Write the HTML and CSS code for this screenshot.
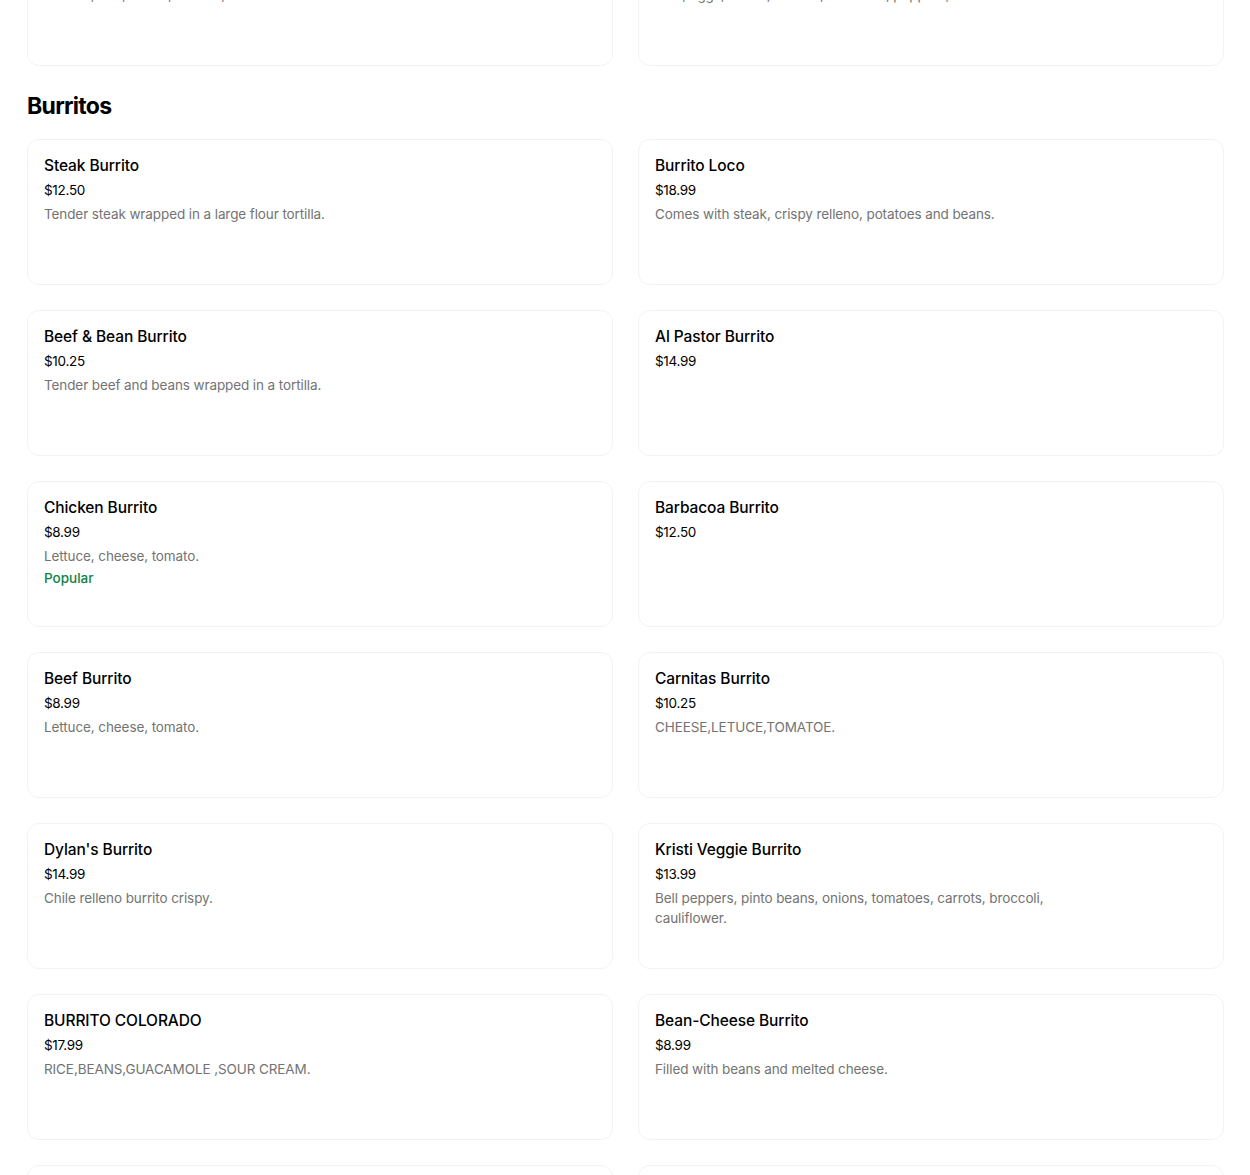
FILE: index.html
```html
<!DOCTYPE html>
<html lang="en">
<head>
<meta charset="utf-8">
<title>Menu</title>
<link rel="stylesheet" href="styles.css">
</head>
<body>
<main class="menu">
  <section class="section section-prev">
    <div class="grid">
      <div class="card">
        <div class="info">
          <div class="title">Breakfast Burrito</div>
          <div class="price">$10.99</div>
          <div class="desc">Lettuce, rice, beans, cheese, sour cream.</div>
        </div>
      </div>
      <div class="card">
        <div class="info">
          <div class="title">Huevos Rancheros</div>
          <div class="price">$12.99</div>
          <div class="desc">Rice, eggs, beans, cheese, tomatoes, peppers, tortillas.</div>
        </div>
      </div>
    </div>
  </section>

  <section class="section">
    <h2 class="section-title">Burritos</h2>
    <div class="grid">
      <div class="card"><div class="info">
        <div class="title">Steak Burrito</div>
        <div class="price">$12.50</div>
        <div class="desc">Tender steak wrapped in a large flour tortilla.</div>
      </div></div>
      <div class="card"><div class="info">
        <div class="title">Burrito Loco</div>
        <div class="price">$18.99</div>
        <div class="desc">Comes with steak, crispy relleno, potatoes and beans.</div>
      </div></div>
      <div class="card"><div class="info">
        <div class="title">Beef &amp; Bean Burrito</div>
        <div class="price">$10.25</div>
        <div class="desc">Tender beef and beans wrapped in a tortilla.</div>
      </div></div>
      <div class="card"><div class="info">
        <div class="title">Al Pastor Burrito</div>
        <div class="price">$14.99</div>
      </div></div>
      <div class="card"><div class="info">
        <div class="title">Chicken Burrito</div>
        <div class="price">$8.99</div>
        <div class="desc">Lettuce, cheese, tomato.</div>
        <div class="tag">Popular</div>
      </div></div>
      <div class="card"><div class="info">
        <div class="title">Barbacoa Burrito</div>
        <div class="price">$12.50</div>
      </div></div>
      <div class="card"><div class="info">
        <div class="title">Beef Burrito</div>
        <div class="price">$8.99</div>
        <div class="desc">Lettuce, cheese, tomato.</div>
      </div></div>
      <div class="card"><div class="info">
        <div class="title">Carnitas Burrito</div>
        <div class="price">$10.25</div>
        <div class="desc">CHEESE,LETUCE,TOMATOE.</div>
      </div></div>
      <div class="card"><div class="info">
        <div class="title">Dylan's Burrito</div>
        <div class="price">$14.99</div>
        <div class="desc">Chile relleno burrito crispy.</div>
      </div></div>
      <div class="card"><div class="info">
        <div class="title">Kristi Veggie Burrito</div>
        <div class="price">$13.99</div>
        <div class="desc">Bell peppers, pinto beans, onions, tomatoes, carrots, broccoli, cauliflower.</div>
      </div></div>
      <div class="card"><div class="info">
        <div class="title">BURRITO COLORADO</div>
        <div class="price">$17.99</div>
        <div class="desc">RICE,BEANS,GUACAMOLE ,SOUR CREAM.</div>
      </div></div>
      <div class="card"><div class="info">
        <div class="title">Bean-Cheese Burrito</div>
        <div class="price">$8.99</div>
        <div class="desc">Filled with beans and melted cheese.</div>
      </div></div>
      <div class="card"><div class="info">
        <div class="title">Bean Burrito</div>
        <div class="price">$8.50</div>
      </div></div>
      <div class="card"><div class="info">
        <div class="title">Veggie Burrito</div>
        <div class="price">$9.99</div>
      </div></div>
    </div>
  </section>
</main>
</body>
</html>
```

FILE: styles.css
```css
html, body {
  margin: 0;
  padding: 0;
  background: #ffffff;
}

body {
  font-family: Inter, "Noto Sans", "Liberation Sans", sans-serif;
  color: #000000;
  overflow: hidden;
}

.menu {
  padding: 0 26px 0 27px;
  margin-top: -80px;
}

.section-title {
  margin: 24px 0 17px;
  font-size: 23px;
  line-height: 32px;
  font-weight: 700;
  letter-spacing: -0.7px;
  color: #000000;
}

.grid {
  display: grid;
  grid-template-columns: 1fr 1fr;
  column-gap: 25px;
  row-gap: 25px;
}

.card {
  height: 146px;
  box-sizing: border-box;
  border: 1px solid #f3f3f3;
  border-radius: 12px;
  padding: 16px 16px 14px;
  background: #ffffff;
}

.info {
  max-width: 405px;
}

.title {
  font-size: 15.5px;
  line-height: 20px;
  font-weight: 500;
  color: #000000;
  letter-spacing: -0.1px;
}

.price {
  margin-top: 4px;
  font-size: 13.5px;
  line-height: 20px;
  color: #000000;
  letter-spacing: -0.3px;
}

.desc {
  margin-top: 4px;
  font-size: 13.5px;
  line-height: 20px;
  color: #737373;
  letter-spacing: -0.1px;
}

.tag {
  margin-top: 2px;
  font-size: 13.5px;
  line-height: 20px;
  font-weight: 500;
  color: #0e8345;
}
```
